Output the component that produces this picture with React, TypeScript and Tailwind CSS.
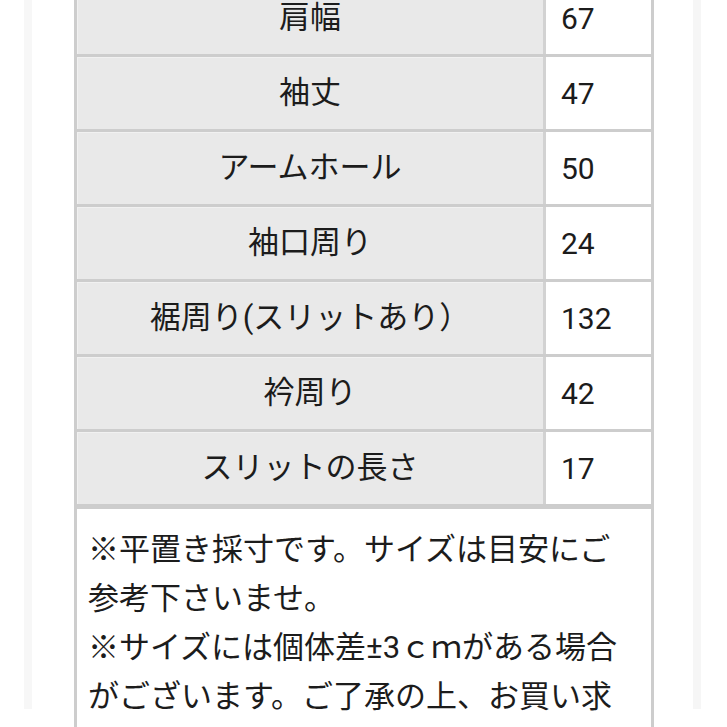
import React from 'react';

const ROWS: [string, string][] = [
  ['肩幅', '67'],
  ['袖丈', '47'],
  ['アームホール', '50'],
  ['袖口周り', '24'],
  ['裾周り(スリットあり）', '132'],
  ['衿周り', '42'],
  ['スリットの長さ', '17'],
];

const NOTE_LINES = [
  '※平置き採寸です。サイズは目安にご',
  '参考下さいませ。',
  '※サイズには個体差±3ｃｍがある場合',
  'がございます。ご了承の上、お買い求',
  'めくださいませ。',
];

const App: React.FC = () => {
  return (
    <div
      className="w-[727px] h-[727px] overflow-hidden bg-white text-[#1c1c1c]"
      style={{ fontFamily: "Roboto, 'Noto Sans CJK JP', sans-serif" }}
    >
      <div className="ml-[24px] w-[677px] h-full border-x-[8px] border-l-[#f7f7f7] border-r-[#f6f6f6] bg-white">
        <div className="ml-[42px] w-[580px] -mt-[18px] border-x-[3px] border-[#cdcdcd]">
          {ROWS.map(([label, value]) => (
            <div key={label} className="flex border-b-[3px] border-[#cdcdcd]">
              <div className="w-[466px] h-[72px] flex items-center justify-center bg-[#e9e9e9] text-[31px] shadow-[inset_1px_1px_0_#f1f1f1]">
                {label}
              </div>
              <div className="w-[3px] bg-[#d2d2d2]" />
              <div className="flex-1 h-[72px] flex items-center pl-[15px] bg-white text-[30px]">
                {value}
              </div>
            </div>
          ))}
          <div className="border-t-[2px] border-[#cdcdcd] pt-[16px] pl-[11px] pr-[10px] text-[31px] leading-[49px] whitespace-nowrap">
            {NOTE_LINES.map((line) => (
              <p key={line}>{line}</p>
            ))}
          </div>
        </div>
      </div>
    </div>
  );
};

export default App;
